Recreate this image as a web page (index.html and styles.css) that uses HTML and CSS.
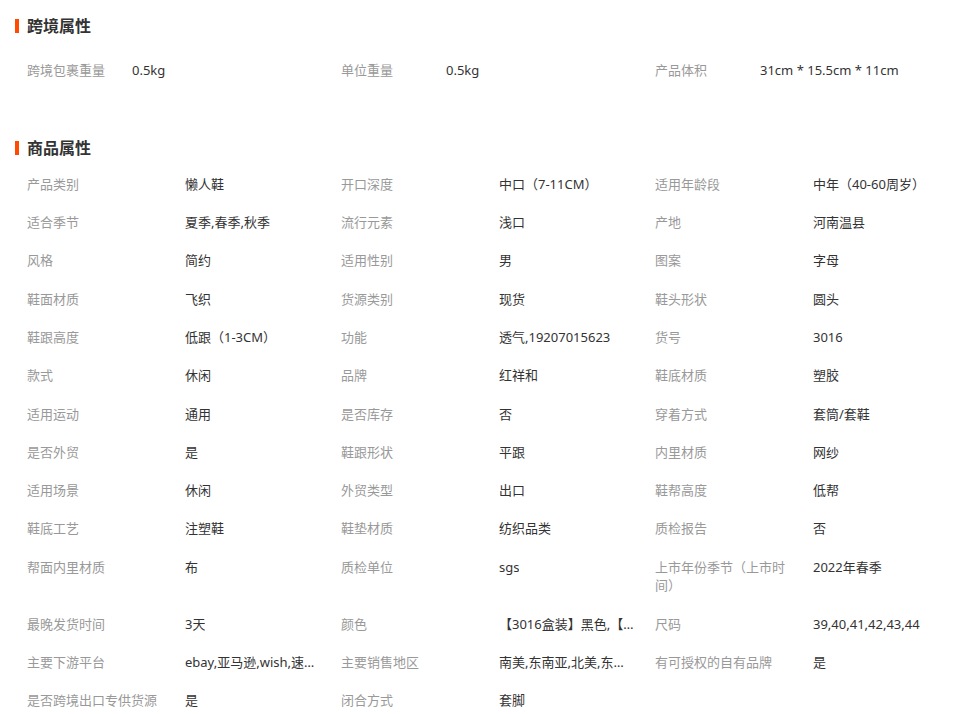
FILE: index.html
```html
<!DOCTYPE html>
<html lang="zh-CN">
<head>
<meta charset="utf-8">
<title>属性</title>
<link rel="stylesheet" href="styles.css">
</head>
<body>
<section class="sec sec-cross">
  <h2 class="sec-title">跨境属性</h2>
  <div class="grid grid-cross">
    <div class="cell"><span class="lab">跨境包裹重量</span><span class="val">0.5kg</span></div>
    <div class="cell"><span class="lab">单位重量</span><span class="val">0.5kg</span></div>
    <div class="cell"><span class="lab">产品体积</span><span class="val">31cm * 15.5cm * 11cm</span></div>
  </div>
</section>
<section class="sec sec-prod">
  <h2 class="sec-title">商品属性</h2>
  <div class="grid grid-prod">
    <div class="cell"><span class="lab">产品类别</span><span class="val">懒人鞋</span></div>
    <div class="cell"><span class="lab">开口深度</span><span class="val">中口（7-11CM）</span></div>
    <div class="cell"><span class="lab">适用年龄段</span><span class="val">中年（40-60周岁）</span></div>

    <div class="cell"><span class="lab">适合季节</span><span class="val">夏季,春季,秋季</span></div>
    <div class="cell"><span class="lab">流行元素</span><span class="val">浅口</span></div>
    <div class="cell"><span class="lab">产地</span><span class="val">河南温县</span></div>

    <div class="cell"><span class="lab">风格</span><span class="val">简约</span></div>
    <div class="cell"><span class="lab">适用性别</span><span class="val">男</span></div>
    <div class="cell"><span class="lab">图案</span><span class="val">字母</span></div>

    <div class="cell"><span class="lab">鞋面材质</span><span class="val">飞织</span></div>
    <div class="cell"><span class="lab">货源类别</span><span class="val">现货</span></div>
    <div class="cell"><span class="lab">鞋头形状</span><span class="val">圆头</span></div>

    <div class="cell"><span class="lab">鞋跟高度</span><span class="val">低跟（1-3CM）</span></div>
    <div class="cell"><span class="lab">功能</span><span class="val">透气,19207015623</span></div>
    <div class="cell"><span class="lab">货号</span><span class="val">3016</span></div>

    <div class="cell"><span class="lab">款式</span><span class="val">休闲</span></div>
    <div class="cell"><span class="lab">品牌</span><span class="val">红祥和</span></div>
    <div class="cell"><span class="lab">鞋底材质</span><span class="val">塑胶</span></div>

    <div class="cell"><span class="lab">适用运动</span><span class="val">通用</span></div>
    <div class="cell"><span class="lab">是否库存</span><span class="val">否</span></div>
    <div class="cell"><span class="lab">穿着方式</span><span class="val">套筒/套鞋</span></div>

    <div class="cell"><span class="lab">是否外贸</span><span class="val">是</span></div>
    <div class="cell"><span class="lab">鞋跟形状</span><span class="val">平跟</span></div>
    <div class="cell"><span class="lab">内里材质</span><span class="val">网纱</span></div>

    <div class="cell"><span class="lab">适用场景</span><span class="val">休闲</span></div>
    <div class="cell"><span class="lab">外贸类型</span><span class="val">出口</span></div>
    <div class="cell"><span class="lab">鞋帮高度</span><span class="val">低帮</span></div>

    <div class="cell"><span class="lab">鞋底工艺</span><span class="val">注塑鞋</span></div>
    <div class="cell"><span class="lab">鞋垫材质</span><span class="val">纺织品类</span></div>
    <div class="cell"><span class="lab">质检报告</span><span class="val">否</span></div>

    <div class="cell"><span class="lab">帮面内里材质</span><span class="val">布</span></div>
    <div class="cell"><span class="lab">质检单位</span><span class="val">sgs</span></div>
    <div class="cell"><span class="lab">上市年份季节（上市时间）</span><span class="val">2022年春季</span></div>

    <div class="cell"><span class="lab">最晚发货时间</span><span class="val">3天</span></div>
    <div class="cell"><span class="lab">颜色</span><span class="val">【3016盒装】黑色,【3016盒装】灰色</span></div>
    <div class="cell"><span class="lab">尺码</span><span class="val">39,40,41,42,43,44</span></div>

    <div class="cell"><span class="lab">主要下游平台</span><span class="val">ebay,亚马逊,wish,速卖通,独立站</span></div>
    <div class="cell"><span class="lab">主要销售地区</span><span class="val">南美,东南亚,北美,东北亚,中东</span></div>
    <div class="cell"><span class="lab">有可授权的自有品牌</span><span class="val">是</span></div>

    <div class="cell"><span class="lab">是否跨境出口专供货源</span><span class="val">是</span></div>
    <div class="cell"><span class="lab">闭合方式</span><span class="val">套脚</span></div>
  </div>
</section>
</body>
</html>
```
FILE: styles.css
```css
html, body {
  margin: 0;
  padding: 0;
  background: #fff;
}
body {
  font-family: "Noto Sans", "Noto Sans CJK SC", sans-serif;
  font-size: 13px;
  color: #333;
}
.sec-title {
  margin: 0;
  position: relative;
  padding-left: 27px;
  font-size: 16px;
  font-weight: bold;
  line-height: 20px;
  color: #333;
}
.sec-title::before {
  content: "";
  position: absolute;
  left: 15px;
  top: 3px;
  width: 4px;
  height: 14px;
  background: #ff4a00;
}
.sec-cross {
  padding-top: 16px;
}
.sec-cross .grid {
  margin-top: 15px;
}
.sec-prod {
  margin-top: 49px;
}
.sec-prod .grid {
  margin-top: 6.6px;
}
.grid {
  display: grid;
  grid-template-columns: 314px 314px 314px;
  padding-left: 27px;
}
.cell {
  display: flex;
  align-items: flex-start;
  padding: 10px 0 9.7px;
  line-height: 18.6px;
  min-width: 0;
}
.lab {
  color: #999;
  flex: 0 0 auto;
  box-sizing: border-box;
}
.grid-cross .lab {
  width: 105px;
}
.grid-prod .lab {
  width: 158px;
  padding-right: 20px;
}
.val {
  color: #333;
  white-space: nowrap;
  overflow: hidden;
  text-overflow: ellipsis;
  min-width: 0;
}
.grid-prod .val {
  max-width: 136px;
}
```
